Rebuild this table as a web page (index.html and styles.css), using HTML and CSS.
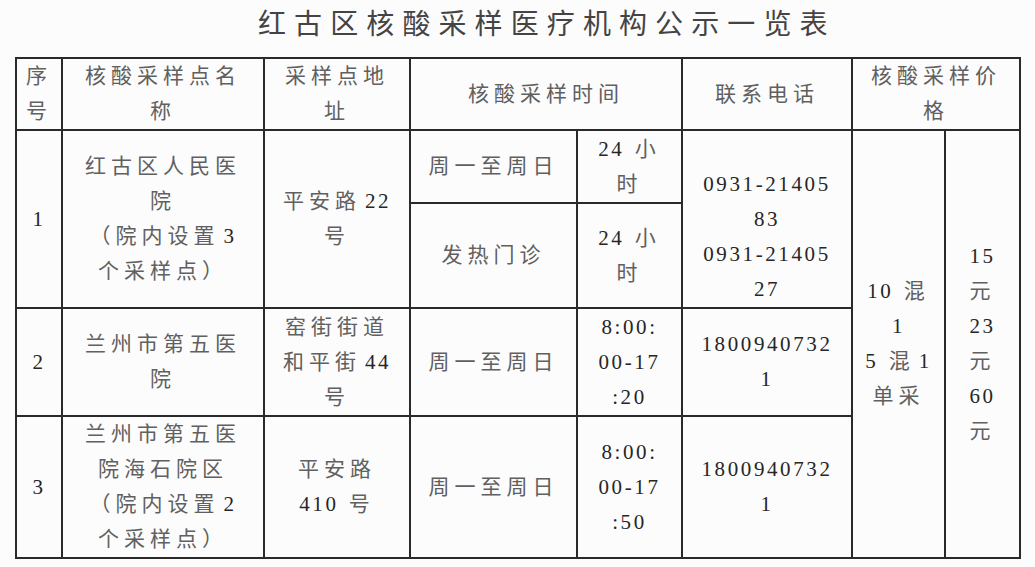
FILE: index.html
```html
<!DOCTYPE html>
<html lang="zh-CN">
<head>
<meta charset="utf-8">
<title>红古区核酸采样医疗机构公示一览表</title>
<link rel="stylesheet" href="styles.css">
</head>
<body>
<div class="page">
  <div class="title">红古区核酸采样医疗机构公示一览表</div>
  <table class="grid">
    <colgroup>
      <col class="c1"><col class="c2"><col class="c3"><col class="c4"><col class="c5"><col class="c6"><col class="c7"><col class="c8">
    </colgroup>
    <tr class="rh">
      <td>序<br>号</td>
      <td>核酸采样点名<br>称</td>
      <td>采样点地<br>址</td>
      <td colspan="2">核酸采样时间</td>
      <td>联系电话</td>
      <td colspan="2">核酸采样价<br>格</td>
    </tr>
    <tr class="r1a">
      <td rowspan="2"><span class="n">1</span></td>
      <td rowspan="2">红古区人民医<br>院<br>（院内设置<span class="n gap">3</span><br>个采样点）</td>
      <td rowspan="2">平安路<span class="n gap">22</span><br>号</td>
      <td>周一至周日</td>
      <td><span class="n">24</span> 小<br>时</td>
      <td rowspan="2" class="phone1"><span class="n">0931-21405<br>83<br>0931-21405<br>27</span></td>
      <td rowspan="4"><span class="n">10</span> 混<br><span class="n">1</span><br><span class="n">5</span> 混<span class="n gap">1</span><br>单采</td>
      <td rowspan="4"><span class="n">15</span><br>元<br><span class="n">23</span><br>元<br><span class="n">60</span><br>元</td>
    </tr>
    <tr class="r1b">
      <td>发热门诊</td>
      <td><span class="n">24</span> 小<br>时</td>
    </tr>
    <tr class="r2">
      <td><span class="n">2</span></td>
      <td>兰州市第五医<br>院</td>
      <td>窑街街道<br>和平街<span class="n gap">44</span><br>号</td>
      <td>周一至周日</td>
      <td><span class="n">8:00:<br>00-17<br>:20</span></td>
      <td><span class="n">1800940732<br>1</span></td>
    </tr>
    <tr class="r3">
      <td><span class="n">3</span></td>
      <td>兰州市第五医<br>院海石院区<br>（院内设置<span class="n gap">2</span><br>个采样点）</td>
      <td>平安路<br><span class="n">410</span> 号</td>
      <td>周一至周日</td>
      <td><span class="n">8:00:<br>00-17<br>:50</span></td>
      <td><span class="n">1800940732<br>1</span></td>
    </tr>
  </table>
</div>
</body>
</html>
```

FILE: styles.css
```css
html, body {
  margin: 0;
  padding: 0;
  background: #fcfcfc;
}

.page {
  width: 1035px;
  height: 567px;
  padding-left: 15px;
  box-sizing: border-box;
}

.title {
  height: 57px;
  line-height: 44px;
  padding-left: 243px;
  font-family: "Noto Sans CJK SC", sans-serif;
  font-size: 28px;
  letter-spacing: 8.1px;
  color: #444;
  white-space: nowrap;
}

.grid {
  border-collapse: collapse;
  table-layout: fixed;
  width: 1004px;
  border: 2px solid #2a2a2a;
}

.grid td {
  border: 2px solid #2a2a2a;
  padding: 0;
  text-align: center;
  vertical-align: middle;
  font-family: "Liberation Serif", "Noto Sans CJK SC", serif;
  font-size: 21px;
  line-height: 35px;
  letter-spacing: 5px;
  color: #606060;
  white-space: nowrap;
}

.grid .n {
  letter-spacing: 2.6px;
  color: #262626;
}

.grid .gap {
  margin-left: 4px;
}

.c1 { width: 46px; }
.c2 { width: 202px; }
.c3 { width: 146px; }
.c4 { width: 167px; }
.c5 { width: 105px; }
.c6 { width: 170px; }
.c7 { width: 93px; }
.c8 { width: 75px; }

.rh { height: 71px; }
.r1a { height: 73px; }
.r1b { height: 105px; }
.r2 { height: 108px; }
.r3 { height: 142px; }

.grid td.phone1 {
  padding-top: 36px;
}
```
